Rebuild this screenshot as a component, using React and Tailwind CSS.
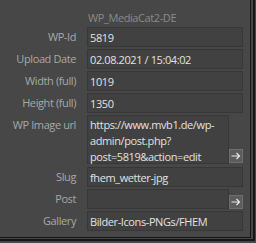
import React from "react";

function ArrowBtn() {
  return (
    <div className="w-[14px] h-[14px] bg-[#5c5c5c] border border-[#6e6e6e] flex items-center justify-center">
      <svg width="10" height="8" viewBox="0 0 10 8" fill="none">
        <path d="M0.5 4H8.5M5.5 1L8.5 4L5.5 7" stroke="#e8e8e8" strokeWidth="1.2" />
      </svg>
    </div>
  );
}

function Row({ label, children, className = "" }) {
  return (
    <div className={"flex " + className}>
      <div className="w-[76px] text-right text-[#a8a8a8] pt-[2px] shrink-0">{label}</div>
      <div className="ml-[11px] flex-1 flex">{children}</div>
    </div>
  );
}

function Field({ value, narrow }) {
  return (
    <div className={"h-[20px] border border-[#373737] bg-[#414141] px-[2px] flex items-center text-[#e2e2e2] " + (narrow ? "w-[142px]" : "w-[156px]")}>
      {value}
    </div>
  );
}

export default function App() {
  const rows = [
    ["WP-Id", "5819"],
    ["Upload Date", "02.08.2021 / 15:04:02"],
    ["Width (full)", "1019"],
    ["Height (full)", "1350"],
  ];
  return (
    <div
      className="w-[256px] h-[243px] bg-[#474747] overflow-hidden text-[11px] leading-[15px] tracking-[-0.4px]"
      style={{ fontFamily: '"Open Sans", "Noto Sans", sans-serif' }}
    >
      <div className="w-[255px] h-[241px] border-r-2 border-b-2 border-[#161616]">
        <div className="w-[251px] h-[238px] border-r border-b border-[#161616] pt-[10px]">
          <div className="pl-[88px] text-[#8a8a8a] h-[16px]">WP_MediaCat2-DE</div>
          <div className="flex flex-col gap-[2px] mt-[1px]">
            {rows.map(([l, v]) => (
              <Row key={l} label={l}>
                <Field value={v} />
              </Row>
            ))}
            <Row label="WP Image url">
              <div className="w-[142px] h-[49px] border border-[#373737] bg-[#414141] px-[2px] pt-[1px] text-[#e2e2e2] leading-[16px]">
                https://www.mvb1.de/wp-
                <br />
                admin/post.php?
                <br />
                post=5819&amp;action=edit
              </div>
              <div className="self-end mb-[1px]">
                <ArrowBtn />
              </div>
            </Row>
            <Row label="Slug" className="mt-[1px]">
              <Field value="fhem_wetter-jpg" />
            </Row>
            <Row label="Post">
              <Field value="" narrow />
              <div className="self-end">
                <ArrowBtn />
              </div>
            </Row>
            <Row label="Gallery">
              <Field value="Bilder-Icons-PNGs/FHEM" />
            </Row>
          </div>
        </div>
      </div>
    </div>
  );
}
